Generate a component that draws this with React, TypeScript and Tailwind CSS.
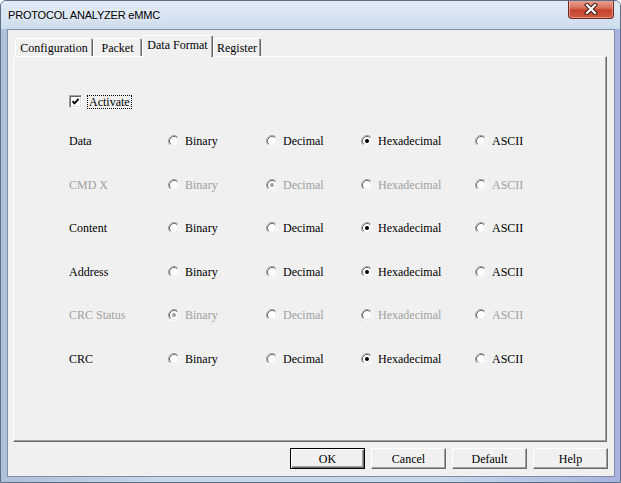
import React from 'react';

type Fmt = 'bin' | 'dec' | 'hex' | 'asc';

const options: { key: Fmt; label: string }[] = [
  { key: 'bin', label: 'Binary' },
  { key: 'dec', label: 'Decimal' },
  { key: 'hex', label: 'Hexadecimal' },
  { key: 'asc', label: 'ASCII' },
];

const rows: { label: string; value: Fmt; disabled?: boolean }[] = [
  { label: 'Data', value: 'hex' },
  { label: 'CMD X', value: 'dec', disabled: true },
  { label: 'Content', value: 'hex' },
  { label: 'Address', value: 'hex' },
  { label: 'CRC Status', value: 'bin', disabled: true },
  { label: 'CRC', value: 'hex' },
];

function Radio({ checked, disabled }: { checked: boolean; disabled?: boolean }) {
  return (
    <svg width="12" height="12" viewBox="0 0 12 12" className="shrink-0">
      <circle cx="6" cy="6" r="5" fill="#ffffff" />
      <path d="M2.11 9.89 A5.5 5.5 0 0 1 9.89 2.11" fill="none" stroke="#a0a0a0" strokeWidth="1" />
      <path d="M2.82 9.18 A4.5 4.5 0 0 1 9.18 2.82" fill="none" stroke="#696969" strokeWidth="1" />
      <path d="M9.89 2.11 A5.5 5.5 0 0 1 2.11 9.89" fill="none" stroke="#ffffff" strokeWidth="1" />
      <path d="M9.18 2.82 A4.5 4.5 0 0 1 2.82 9.18" fill="none" stroke="#e3e3e3" strokeWidth="1" />
      {checked && <circle cx="6" cy="6" r="2" fill={disabled ? '#a0a0a0' : '#000000'} />}
    </svg>
  );
}

function Tab({ label, selected, width }: { label: string; selected?: boolean; width: string }) {
  if (selected) {
    return (
      <div
        className={`${width} relative z-10 -mb-px h-[22px] bg-[#f0f0f0] border-t border-l border-white border-r border-r-[#696969] shadow-[inset_-1px_0_0_#a0a0a0] rounded-t-[2px] flex justify-center pt-[2px]`}
      >
        {label}
      </div>
    );
  }
  return (
    <div
      className={`${width} h-[18px] border-t border-l border-white border-r border-r-[#696969] shadow-[inset_-1px_0_0_#a0a0a0] rounded-t-[2px] flex items-center justify-center`}
    >
      {label}
    </div>
  );
}

function Button({ label, isDefault }: { label: string; isDefault?: boolean }) {
  if (isDefault) {
    return (
      <div className="w-[75px] h-[21px] border border-black bg-[#f0f0f0] shadow-[inset_1px_1px_0_#ffffff,inset_-1px_-1px_0_#696969,inset_-2px_-2px_0_#a0a0a0] flex items-center justify-center">
        {label}
      </div>
    );
  }
  return (
    <div className="w-[75px] h-[21px] border border-t-white border-l-white border-b-[#696969] border-r-[#696969] bg-[#f0f0f0] shadow-[inset_-1px_-1px_0_#a0a0a0] flex items-center justify-center">
      {label}
    </div>
  );
}

export default function App() {
  return (
    <div className="w-[621px] h-[483px] overflow-hidden rounded-t-[6px] border border-[#5d6f86] bg-[linear-gradient(90deg,#aebfd6_0%,#c7d7ea_25%,#c9d8ea_70%,#aab3e0_100%)] flex flex-col">
      {/* Title bar */}
      <div className="h-[28px] flex items-start justify-between bg-[linear-gradient(180deg,#e1ebf6_0%,#cddced_100%)]">
        <div className="pl-[7px] pt-[6px] text-[11px] leading-[16px] tracking-[-0.2px] text-black font-['Liberation_Sans','Arial',sans-serif] [text-shadow:0_0_6px_#ffffff]">
          PROTOCOL ANALYZER eMMC
        </div>
        <div className="mr-[6px] -mt-px w-[46px] h-[19px] rounded-b-[4px] border border-t-0 border-[#6b2a22] bg-[linear-gradient(180deg,#e8a596_0%,#d8705d_45%,#c4442e_55%,#cf5a3e_100%)] shadow-[inset_0_0_0_1px_rgba(255,200,190,0.5)] flex items-center justify-center">
          <svg width="14" height="12" viewBox="0 0 14 12">
            <path d="M3 2 L11 10 M11 2 L3 10" stroke="#3a1c18" strokeWidth="4.2" strokeLinecap="square" />
            <path d="M3 2 L11 10 M11 2 L3 10" stroke="#ffffff" strokeWidth="2.2" strokeLinecap="square" />
          </svg>
        </div>
      </div>

      {/* Client area */}
      <div className="ml-[6px] w-[608px] h-[448px] border border-[#7d8ea6] bg-[#f0f0f0] text-[12px] leading-[14px] text-black font-['Liberation_Serif','Times_New_Roman',serif] flex flex-col">
        {/* Tabs */}
        <div className="mt-[5px] ml-[7px] h-[21px] flex items-end">
          <Tab label="Configuration" width="w-[78px]" />
          <Tab label="Packet" width="w-[49px]" />
          <Tab label="Data Format" width="w-[71px]" selected />
          <Tab label="Register" width="w-[48px]" />
        </div>

        {/* Panel */}
        <div className="ml-[5px] w-[594px] h-[386px] border-t border-l border-white border-r border-b border-r-[#696969] border-b-[#696969] shadow-[inset_-1px_-1px_0_#a0a0a0] pl-[55px] pt-[38px]">
          <div className="flex items-center h-[13px]">
            <div className="w-[13px] h-[13px] bg-white border border-t-[#a0a0a0] border-l-[#a0a0a0] border-b-white border-r-white shadow-[inset_1px_1px_0_#696969,inset_-1px_-1px_0_#e3e3e3] flex items-center justify-center">
              <svg width="9" height="9" viewBox="0 0 9 9">
                <path d="M1.5 4.2 L3.5 6.4 L7.6 1.8" fill="none" stroke="#000" strokeWidth="1.8" />
              </svg>
            </div>
            <div className="ml-[5px] px-px border border-dotted border-black leading-[12px]">Activate</div>
          </div>

          <div className="mt-[11px] flex flex-col">
            {rows.map((row, i) => (
              <div
                key={row.label}
                className={`${i % 2 === 0 ? 'h-[44px]' : 'h-[43px]'} grid grid-cols-[99px_98px_95px_114px_1fr] items-center ${
                  row.disabled ? 'text-[#a0a0a0]' : 'text-black'
                }`}
              >
                <div>{row.label}</div>
                {options.map((o) => (
                  <div key={o.key} className="flex items-center gap-[5px]">
                    <Radio checked={row.value === o.key} disabled={row.disabled} />
                    <span>{o.label}</span>
                  </div>
                ))}
              </div>
            ))}
          </div>
        </div>

        {/* Buttons */}
        <div className="mt-[6px] mr-[6px] flex justify-end gap-[6px]">
          <Button label="OK" isDefault />
          <Button label="Cancel" />
          <Button label="Default" />
          <Button label="Help" />
        </div>
      </div>
    </div>
  );
}
